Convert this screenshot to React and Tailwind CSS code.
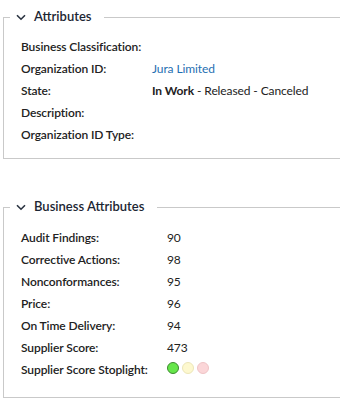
import React from 'react';

const Chevron = () => (
  <svg width="10" height="7" viewBox="0 0 10 7" className="shrink-0">
    <path d="M1 1.2 L5 5.2 L9 1.2" fill="none" stroke="#2a3340" strokeWidth="1.6" />
  </svg>
);

const Section = ({ title, children, className = '' }) => (
  <fieldset className={`ml-[3px] w-[370px] border-y border-l border-r-0 border-[#c9c9c9] pl-[17px] ${className}`}>
    <legend className="-ml-[11px] px-[6px] flex items-center gap-[8px] h-[20px]">
      <Chevron />
      <span className="text-[13px] font-semibold text-[#1c2633] pr-[7px]">{title}</span>
    </legend>
    {children}
  </fieldset>
);

const Row = ({ label, labelWidth, children }) => (
  <div className="flex items-center h-[22px] text-[12px] tracking-[-0.1px]">
    <div className={`${labelWidth} shrink-0 font-semibold text-[#222] whitespace-nowrap`}>{label}</div>
    <div className="text-[#222] whitespace-nowrap">{children}</div>
  </div>
);

export default function App() {
  const bizRows = [
    ['Audit Findings:', '90'],
    ['Corrective Actions:', '98'],
    ['Nonconformances:', '95'],
    ['Price:', '96'],
    ['On Time Delivery:', '94'],
    ['Supplier Score:', '473'],
  ];

  return (
    <div className="w-[340px] h-[400px] bg-white overflow-hidden pt-[7px]" style={{ fontFamily: 'Lato, "Noto Sans", sans-serif' }}>
      <Section title="Attributes" className="pt-[9px] pb-[12px]">
        <Row label="Business Classification:" labelWidth="w-[131px]" />
        <Row label="Organization ID:" labelWidth="w-[131px]">
          <span className="text-[#1f6fb2]">Jura Limited</span>
        </Row>
        <Row label="State:" labelWidth="w-[131px]">
          <span className="font-bold">In Work</span> - Released - Canceled
        </Row>
        <Row label="Description:" labelWidth="w-[131px]" />
        <Row label="Organization ID Type:" labelWidth="w-[131px]" />
      </Section>

      <Section title="Business Attributes" className="mt-[38px] pt-[10px] pb-[16px]">
        {bizRows.map(([l, v]) => (
          <Row key={l} label={l} labelWidth="w-[146px]">{v}</Row>
        ))}
        <Row label="Supplier Score Stoplight:" labelWidth="w-[146px]">
          <div className="flex gap-[3px] -mt-[4px]">
            <span className="w-[12px] h-[12px] rounded-full bg-[#66e64a] border border-[#3d8a30]" />
            <span className="w-[12px] h-[12px] rounded-full bg-[#fdf8cf] border border-[#ece6b8]" />
            <span className="w-[12px] h-[12px] rounded-full bg-[#fbd6d8] border border-[#efc4c6]" />
          </div>
        </Row>
      </Section>
    </div>
  );
}
